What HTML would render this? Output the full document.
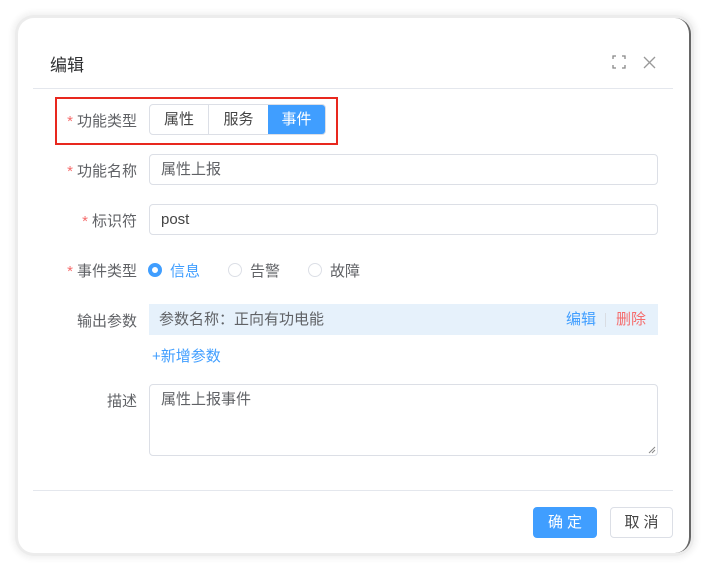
<!DOCTYPE html>
<html><head><meta charset="utf-8"><style>
*{box-sizing:border-box;margin:0;padding:0}
body{width:711px;height:571px;background:#fff;position:relative;overflow:hidden;font-family:"Liberation Sans","Noto Sans CJK SC",sans-serif;font-size:15px;color:#606266}
.dlg{position:absolute;left:18px;top:18px;width:673px;height:535px;background:#fff;border-radius:16px;box-shadow:0 0 0 3px #ececec,0 0 6px 6px #f2f2f2;border-right:2px solid #666}
.a{position:absolute}
.lbl{position:absolute;right:574px;text-align:right;white-space:nowrap}
.lbl b{color:#f56c6c;font-weight:normal;margin-right:4px}
.inp{position:absolute;left:149px;width:509px;height:31px;border:1px solid #dcdfe6;border-radius:4px;padding-left:11px;line-height:29px}
.rad{position:absolute;width:14px;height:14px;border:1px solid #dcdfe6;border-radius:50%;top:263px}
</style></head><body>
<div class="dlg"></div>
<div class="a" style="left:50px;top:51px;font-size:17px;color:#303133">编辑</div>
<svg class="a" style="left:612px;top:55px" width="14" height="14" viewBox="0 0 14 14" fill="none" stroke="#888" stroke-width="1.3"><path d="M1 4V1h3M10 1h3v3M13 10v3h-3M4 13H1v-3"/></svg>
<svg class="a" style="left:643px;top:56px" width="13" height="13" viewBox="0 0 13 13" stroke="#999" stroke-width="1.3"><path d="M1 1l11 11M12 1L1 12"/></svg>
<div class="a" style="left:33px;top:88px;width:640px;height:1px;background:#e4e7ed"></div>
<div class="a" style="left:55px;top:97px;width:283px;height:48px;border:2px solid #e8281e"></div>
<div class="lbl" style="top:110px"><b>*</b>功能类型</div>
<div class="a" style="left:149px;top:104px;width:177px;height:31px;border:1px solid #dcdfe6;border-radius:4px;display:flex;overflow:hidden;font-size:15px;color:#444">
<div style="width:59px;text-align:center;line-height:29px;border-right:1px solid #dcdfe6">属性</div>
<div style="width:59px;text-align:center;line-height:29px">服务</div>
<div style="flex:1;text-align:center;line-height:29px;background:#409eff;color:#fff">事件</div></div>
<div class="lbl" style="top:160px"><b>*</b>功能名称</div>
<div class="inp" style="top:154px">属性上报</div>
<div class="lbl" style="top:210px"><b>*</b>标识符</div>
<div class="inp" style="top:204px;color:#444">post</div>
<div class="lbl" style="top:260px"><b>*</b>事件类型</div>
<span class="rad" style="left:148px;border:4px solid #409eff"></span><span class="a" style="left:170px;top:260px;color:#409eff">信息</span>
<span class="rad" style="left:228px"></span><span class="a" style="left:250px;top:260px">告警</span>
<span class="rad" style="left:308px"></span><span class="a" style="left:330px;top:260px">故障</span>
<div class="lbl" style="top:310px">输出参数</div>
<div class="a" style="left:149px;top:304px;width:509px;height:31px;background:#e6f1fb;padding-left:10px;line-height:31px">参数名称：正向有功电能
<span class="a" style="left:417px;top:0;color:#409eff">编辑</span>
<span class="a" style="left:456px;top:9px;width:1px;height:14px;background:#d9dde3"></span>
<span class="a" style="left:467px;top:0;color:#f56c6c">删除</span></div>
<div class="a" style="left:152px;top:345px;color:#409eff">+新增参数</div>
<div class="lbl" style="top:390px">描述</div>
<div class="inp" style="top:384px;height:72px;line-height:20px;padding-top:5px">属性上报事件</div>
<svg class="a" style="left:648px;top:446px" width="8" height="8" stroke="#888" stroke-width="1"><path d="M1 7L7 1M4 7L7 4"/></svg>
<div class="a" style="left:33px;top:490px;width:640px;height:1px;background:#e4e7ed"></div>
<div class="a" style="left:533px;top:507px;width:64px;height:31px;background:#409eff;border-radius:4px;color:#fff;text-align:center;line-height:31px;letter-spacing:4px;padding-left:4px">确定</div>
<div class="a" style="left:610px;top:507px;width:63px;height:31px;border:1px solid #dcdfe6;border-radius:4px;color:#444;text-align:center;line-height:29px;letter-spacing:4px;padding-left:4px">取消</div>
</body></html>
